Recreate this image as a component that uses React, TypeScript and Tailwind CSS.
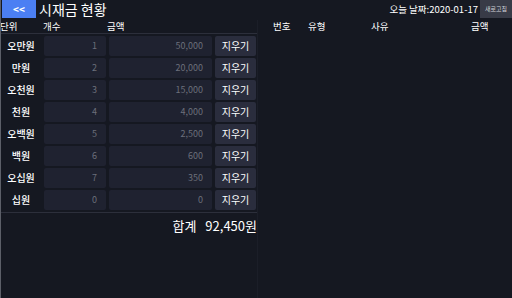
import React from 'react';

const rows = [
  { label: '오만원', count: '1', amount: '50,000' },
  { label: '만원', count: '2', amount: '20,000' },
  { label: '오천원', count: '3', amount: '15,000' },
  { label: '천원', count: '4', amount: '4,000' },
  { label: '오백원', count: '5', amount: '2,500' },
  { label: '백원', count: '6', amount: '600' },
  { label: '오십원', count: '7', amount: '350' },
  { label: '십원', count: '0', amount: '0' },
];

export default function App() {
  return (
    <div
      className="w-[512px] h-[298px] bg-[#151821] text-white overflow-hidden border-l border-[#5c5f68] flex flex-col"
      style={{ fontFamily: '"Noto Sans CJK KR", "Noto Sans", sans-serif' }}
    >
      <div className="flex items-start h-[20px] shrink-0">
        <button className="ml-[1px] w-[34px] h-[18px] bg-[#4b7ff3] text-[10px] font-bold leading-none flex items-center justify-center">&lt;&lt;</button>
        <h1 className="ml-[3px] mt-[1px] text-[14px] leading-[16px]">시재금 현황</h1>
        <div className="ml-auto mt-[4px] text-[9.5px] leading-[11px] mr-[2px]">오늘 날짜:2020-01-17</div>
        <button className="w-[32px] h-[18px] bg-[#383b47] text-[6px] leading-none text-[#d0d2d8]">새로고침</button>
      </div>
      <div className="flex flex-1 min-h-0">
        <div className="w-[256px] shrink-0 flex flex-col">
          <div className="flex items-center h-[14px] text-[9.5px] leading-none border-b border-[#2c2f3b]">
            <span className="w-[43px] -ml-[1px]">단위</span>
            <span className="w-[64px]">개수</span>
            <span>금액</span>
          </div>
          <div className="flex flex-col gap-[2px] pt-[2px] pb-[2px] border-b border-[#2c2f3b]">
            {rows.map((r) => (
              <div key={r.label} className="flex items-center h-[20px] gap-[3px]">
                <span className="w-[40px] text-center text-[10px] font-medium leading-none">{r.label}</span>
                <div className="w-[62px] h-full bg-[#1f2230] rounded-[2px] flex items-center justify-end pr-[9px] text-[9px] text-[#6c6f7b]">{r.count}</div>
                <div className="w-[103px] h-full bg-[#1f2230] rounded-[2px] flex items-center justify-end pr-[9px] text-[9px] text-[#6c6f7b]">{r.amount}</div>
                <button className="w-[41px] h-full bg-[#2a2d3d] rounded-[2px] text-[10px] leading-none">지우기</button>
              </div>
            ))}
          </div>
          <div className="flex justify-end items-baseline gap-[9px] pt-[6px] text-[13px] leading-none">
            <span>합계</span>
            <span>92,450원</span>
          </div>
        </div>
        <div className="flex-1 border-l border-[#1b1e28]">
          <div className="flex items-center h-[14px] text-[9.5px] leading-none">
            <span className="ml-[15px] w-[35px]">번호</span>
            <span className="w-[63px]">유형</span>
            <span className="w-[100px]">사유</span>
            <span>금액</span>
          </div>
        </div>
      </div>
    </div>
  );
}
